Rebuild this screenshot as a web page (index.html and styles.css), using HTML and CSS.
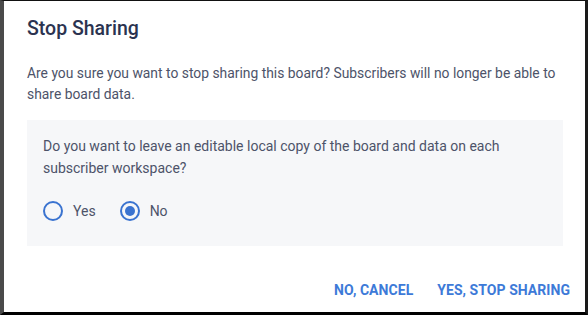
FILE: index.html
```html
<!DOCTYPE html>
<html>
<head>
<meta charset="utf-8">
<link rel="stylesheet" href="styles.css">
</head>
<body>
<div class="frame">
  <div class="dialog">
    <h1 class="title">Stop Sharing</h1>
    <p class="message">Are you sure you want to stop sharing this board? Subscribers will no longer be able to share board data.</p>
    <div class="panel">
      <p class="question">Do you want to leave an editable local copy of the board and data on each subscriber workspace?</p>
      <div class="options">
        <label class="option"><span class="radio"></span><span>Yes</span></label>
        <label class="option"><span class="radio checked"></span><span>No</span></label>
      </div>
    </div>
    <div class="actions">
      <button class="btn">NO, CANCEL</button>
      <button class="btn">YES, STOP SHARING</button>
    </div>
  </div>
</div>
</body>
</html>
```
FILE: styles.css
```css
html, body {
  margin: 0;
  padding: 0;
  width: 588px;
  height: 315px;
  background: #000;
  overflow: hidden;
}
.frame {
  box-sizing: border-box;
  width: 588px;
  height: 315px;
  border-top: 1px solid #111;
  border-left: 4px solid #4a4a4a;
  border-right: 3px solid #1a1a1a;
  border-bottom: 3px solid #000;
  background: #fff;
}
.dialog {
  box-sizing: border-box;
  height: 100%;
  padding: 14px 22px 0 23px;
  font-family: Roboto, "Liberation Sans", sans-serif;
  display: flex;
  flex-direction: column;
}
.title {
  margin: 0;
  font-size: 19.5px;
  font-weight: 500;
  color: #2b3350;
  line-height: 28px;
}
.message {
  margin: 20px 0 0;
  font-size: 13.87px;
  line-height: 21px;
  color: #4d5369;
}
.panel {
  margin-top: 15px;
  background: #f6f7f9;
  padding: 15px 16px 25px;
}
.question {
  margin: 0;
  font-size: 14px;
  line-height: 22px;
  color: #4d5369;
}
.options {
  display: flex;
  gap: 24px;
  margin-top: 22px;
}
.option {
  display: flex;
  align-items: center;
  gap: 10px;
  font-size: 14px;
  color: #4d5369;
}
.radio {
  box-sizing: border-box;
  width: 20px;
  height: 20px;
  border: 2px solid #3a73d0;
  border-radius: 50%;
  display: inline-block;
  position: relative;
}
.radio.checked::after {
  content: "";
  position: absolute;
  left: 3px;
  top: 3px;
  width: 10px;
  height: 10px;
  border-radius: 50%;
  background: #3a73d0;
}
.actions {
  display: flex;
  justify-content: flex-end;
  gap: 24px;
  margin-top: 36px;
  margin-right: -7px;
}
.btn {
  border: none;
  background: none;
  padding: 0;
  font-family: Roboto, "Liberation Sans", sans-serif;
  font-size: 14px;
  font-weight: 700;
  color: #3d7ad8;
  letter-spacing: 0.05px;
}
```
